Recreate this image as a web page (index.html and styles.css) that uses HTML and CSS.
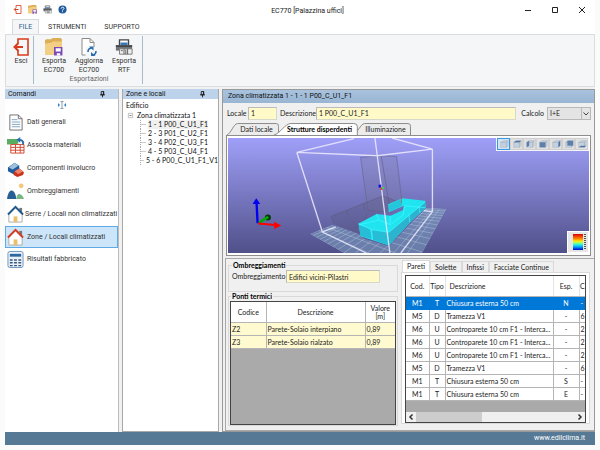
FILE: index.html
```html
<!DOCTYPE html>
<html lang="it">
<head>
<meta charset="utf-8">
<title>EC770 [Palazzina uffici]</title>
<link rel="stylesheet" href="styles.css">
</head>
<body>
<svg class="defs" aria-hidden="true">
  <defs>
    <symbol id="exit" viewBox="0 0 16 18"><path d="M5 5V1h10v16H5v-4" fill="none" stroke="#d83b1b" stroke-width="1.6"/><path d="M10 9H2M5.500 5L1.500 9l4 4" fill="none" stroke="#d83b1b" stroke-width="2"/></symbol>
    <symbol id="folder" viewBox="0 0 16 16"><path d="M0 14V2l1-1h4l2-1h7l1 1v13z" fill="#dcae55"/><path d="M0 15V5l6-1 1-1h8v12z" fill="#f2cf85"/><path d="M8 8h7.500v7.500H8z" fill="#7a4bb5"/><path d="M9.500 9h4.500v3H9.500zM10.500 13.500h3v2h-3z" fill="#fff"/></symbol>
    <symbol id="printer" viewBox="0 0 20 18"><path d="M5 7V1h10v6" fill="#fff" stroke="#444" stroke-width="1.500"/><path d="M6 4h8v3H6z" fill="#3a78b5"/><path d="M1 7h18v6H1z" fill="#6f7478"/><path d="M1 7h18v2H1z" fill="#43474a"/><path d="M5 11h14v6H5z" fill="#eee" stroke="#777"/><path d="M10 11v6M14 11v6M12 12v5M6.500 13h2" stroke="#555"/></symbol>
    <symbol id="pin" viewBox="0 0 6 8"><path d="M1.500 1h3v4h-3zM0 5h6M3 5v3" fill="none" stroke="#111"/><path d="M3.500 1h1v4h-1z" fill="#111"/></symbol>
    <symbol id="tab" viewBox="0 0 60 11" preserveAspectRatio="none"><path d="M0 11C4 10 8 0.500 12 0.500H57Q59.500 0.500 59.500 3V11" stroke="#8b8b8b" vector-effect="non-scaling-stroke"/></symbol>
    <symbol id="cube" viewBox="0 0 12 12"><path d="M2 4l3-2h6L9 4zM2 4h7v6H2zM9 4l2-2v6l-2 2z" fill="#c5d0dc" stroke="#a5b4c4" stroke-width=".6"/></symbol>
    <linearGradient id="sky" x1="0" y1="0" x2="0" y2="1"><stop offset="0" stop-color="#9f9ff8"/><stop offset="1" stop-color="#50508a"/></linearGradient>
    <linearGradient id="heat" x1="0" y1="0" x2="0" y2="1"><stop offset="0" stop-color="#d00"/><stop offset=".3" stop-color="#f80"/><stop offset=".45" stop-color="#fe0"/><stop offset=".6" stop-color="#6fa"/><stop offset=".75" stop-color="#0cf"/><stop offset="1" stop-color="#00c"/></linearGradient>
    <clipPath id="floor"><path d="M268 298L335 270 415 298 430 312 505 335 618 218 678 222 549 458z"/></clipPath>
  </defs>
</svg>
<div class="window">
  <header class="titlebar">
    <nav class="quick" aria-label="Accesso rapido">
      <button aria-label="Esci"><svg><use href="#exit"/></svg></button>
      <button aria-label="Esporta"><svg><use href="#folder"/></svg></button>
      <button aria-label="Stampa"><svg><use href="#printer"/></svg></button>
      <button aria-label="Aiuto"><svg viewBox="0 0 10 10"><circle cx="5" cy="5" r="4.500" fill="#205a9c"/><path d="M3.500 4C3.500 2 6.700 2 6.600 3.900 6.500 4.900 5 4.900 5 6.200M5 7v1" fill="none" stroke="#fff" stroke-width="1.100"/></svg></button>
    </nav>
    <h1>EC770 [Palazzina uffici]</h1>
    <div class="winbtns">
      <button aria-label="Riduci"><svg viewBox="0 0 8 8"><path d="M1 4.500h6" stroke="#222"/></svg></button>
      <button aria-label="Ingrandisci"><svg viewBox="0 0 8 8"><path d="M1.500 1.500h5v5h-5z" fill="none" stroke="#222"/></svg></button>
      <button aria-label="Chiudi"><svg viewBox="0 0 8 8"><path d="M1 1l6 6M7 1L1 7" stroke="#222"/></svg></button>
    </div>
  </header>
  <nav class="menu">
    <button class="on">FILE</button><button>STRUMENTI</button><button>SUPPORTO</button>
  </nav>
  <section class="ribbon">
    <div class="group"><div class="tools"><button class="slim"><svg><use href="#exit"/></svg>Esci</button></div></div>
    <div class="group wide">
      <div class="tools">
        <button><svg><use href="#folder"/></svg>Esporta<br>EC700</button>
        <button><svg viewBox="0 0 18 18"><path d="M2 .5h8l4 4V17H2z" fill="#fff" stroke="#8a8a8a"/><path d="M10 .5v4h4" fill="none" stroke="#8a8a8a"/><path d="M5.500 9h12v9h-12z" fill="#f5f6f7"/><path d="M8 14c0-3 2-4 4-4M12 17c3 0 4-2 4-4" fill="none" stroke="#2b6cae" stroke-width="1.600"/><path d="M9 8.500h4.500v4zM15.500 18H11v-4z" fill="#2b6cae"/></svg>Aggiorna<br>EC700</button>
        <button><svg><use href="#printer"/></svg>Esporta<br>RTF</button>
      </div>
      <span class="caption">Esportazioni</span>
    </div>
  </section>
  <main class="work">
    <aside class="commands">
      <h2>Comandi<svg><use href="#pin"/></svg></h2>
      <svg class="resize" viewBox="0 0 10 8"><path d="M5 1v6M3.500 .5h3M3.500 7.500h3" stroke="#8a9bb0"/><path d="M1 2l2 2-2 2zM9 2L7 4l2 2z" fill="#2f7fd0"/></svg>
      <nav>
        <button><svg viewBox="0 0 18 18"><path d="M3 1h9l4 4v12H3z" fill="#fff" stroke="#6c6f73"/><path d="M12 1v4h4" fill="none" stroke="#6c6f73"/><path d="M5 6h6M5 8.500h9M5 11h9M5 13.500h9" stroke="#7fa0bd"/></svg>Dati generali</button>
        <button><svg viewBox="0 0 18 18"><path d="M0 2h12v5l-4 1H0z" fill="#58ad62"/><path d="M4 8h14v9H4z" fill="#fff" stroke="#d4442a"/><path d="M4 11h14M4 14h14M9 8v9M14 8v9" stroke="#d4442a"/><path d="M17 8c1-4-2-5-4-5" fill="none" stroke="#2b6cae" stroke-width="2"/><path d="M10 3l4-3v6z" fill="#2b6cae"/></svg>Associa materiali</button>
        <button><svg viewBox="0 0 18 18"><path d="M1 8l7-5 5 3v5l-6 4-6-3z" fill="#1d5b9c"/><path d="M2 8l6-5 4 3-6 4z" fill="#9fc0de"/><path d="M7 13l6-4 5 4-1 3-6 2-4-2z" fill="#c8341b"/><path d="M8 12l5-3 4 3-5 3z" fill="#ef8068"/></svg>Componenti involucro</button>
        <button><svg viewBox="0 0 18 18"><circle cx="15" cy="3" r="2.500" fill="#f3c77c"/><path d="M0 17c1-7 3-9 5-9s4 3 5 9z" fill="#285f94"/><path d="M10 17c0-4 2-6 4-5s3 2 4 5z" fill="#76b783"/></svg>Ombreggiamenti</button>
        <button><svg viewBox="0 0 18 18"><path d="M13 2h3v6h-3z" fill="#777"/><path d="M2 9l7-7 7 7v8H2z" fill="#fff" stroke="#aaa"/><path d="M1 9l8-8 8 8" fill="none" stroke="#20598f" stroke-width="2"/><path d="M7 11h4v6H7z" fill="#edbd69"/></svg>Serre / Locali non climatizzati</button>
        <button class="on"><svg viewBox="0 0 18 18"><path d="M13 2h3v6h-3z" fill="#777"/><path d="M2 9l7-7 7 7v8H2z" fill="#fff" stroke="#aaa"/><path d="M1 9l8-8 8 8" fill="none" stroke="#d63a20" stroke-width="2"/><path d="M7 11h4v6H7z" fill="#edbd69"/></svg>Zone / Locali climatizzati</button>
        <button><svg viewBox="0 0 18 18"><rect x="1" y=".5" width="16" height="17" rx="2" fill="#e9f0f7" stroke="#6b93bc"/><path d="M3 3h12v3H3z" fill="#2d67a3"/><path d="M3 9.500h12M3 12.500h12M3 15.500h12" stroke="#37587c" stroke-width="1.500" stroke-dasharray="3 1.500"/></svg>Risultati fabbricato</button>
      </nav>
    </aside>
    <section class="zones">
      <h2>Zone e locali<svg><use href="#pin"/></svg></h2>
      <div class="tree">
        <p>Edificio</p>
        <p class="branch"><svg viewBox="0 0 7 7"><path d="M.5 .5h6v6h-6z" fill="#fff" stroke="#aaa"/><path d="M2 3.500h3" stroke="#555"/></svg>Zona climatizzata 1</p>
        <ul>
          <li class="on"><span>1 - 1 P00_C_U1_F1</span></li>
          <li>2 - 3 P01_C_U2_F1</li>
          <li>3 - 4 P02_C_U3_F1</li>
          <li>4 - 5 P03_C_U4_F1</li>
          <li>5 - 6 P00_C_U1_F1_V1</li>
        </ul>
      </div>
    </section>
    <section class="detail">
      <h2>Zona climatizzata 1 - 1 - 1 P00_C_U1_F1</h2>
      <form class="fields">
        <label for="loc">Locale</label><input id="loc" class="short" value="1">
        <label for="desc">Descrizione</label><input id="desc" class="long" value="1 P00_C_U1_F1">
        <label for="calc">Calcolo</label>
        <span class="combo"><select id="calc"><option>I+E</option></select><svg viewBox="0 0 9 11"><path d="M.5 0v11" stroke="#bbb"/><path d="M2.500 4.500l2.500 2.500 2.500-2.500" fill="none" stroke="#444"/></svg></span>
      </form>
      <div class="tabs">
        <button><svg fill="#ececec"><use href="#tab"/></svg><span>Dati locale</span></button>
        <button class="on"><svg fill="#fff"><use href="#tab"/></svg><span>Strutture disperdenti</span></button>
        <button><svg fill="#ececec"><use href="#tab"/></svg><span>Illuminazione</span></button>
      </div>
      <div class="view">
        <svg class="scene" viewBox="21 6 1086 350" preserveAspectRatio="none">
          <path d="M21 6h1086v350H21z" fill="url(#sky)"/>
          <g clip-path="url(#floor)"><path d="M268 298L481 209 678 222 549 458z" fill="#7894b8" opacity=".65"/><path id="grid" fill="none" stroke="#a9c3d6" stroke-width="2" opacity=".75"/></g>
          <path d="M420 65L482 60 528 62 545 205 510 232 442 226z" fill="#77779c" fill-opacity=".3" stroke="#666690" stroke-width="2"/>
          <path d="M482 60L510 232M487 182L545 205M330 245L487 182M330 245L338 265 413 295 440 235M378 226L384 247M428 206L434 228M400 260L410 292" fill="none" stroke="#626085" stroke-width="2"/>
          <path d="M330 245L487 182 545 205 413 270 413 295 338 265z" fill="#57557c" opacity=".3"/>
          <path d="M414 266L468 237 510 243 548 225 550 212 505 232 503 208 545 189 614 197 616 218 570 262 505 333 420 305z" fill="#20e4f0"/>
          <path d="M505 293L570 238 614 202 616 218 570 262 505 333z" fill="#2cb4cf"/>
          <path d="M455 285L505 293 505 333 457 316zM414 270L450 284 453 313 420 304z" fill="#28bdd6"/>
          <path d="M505 210L542 192 545 212 507 230z" fill="#24c6dc"/>
          <path d="M414 266L455 285 505 293 570 238 614 200M468 237L475 256 414 270M475 256L510 270 548 240 552 212 614 218M450 282L456 316M565 238L568 262M596 214L598 234M510 243L508 270" fill="none" stroke="#3ffaff" stroke-width="2"/>
          <path d="M400 8L228 50 470 60 636 40 515 6M228 50L305 292 437 356M463 6L470 60 508 356M636 40V230L541 356M305 292L345 277M636 230L610 227" fill="none" stroke="#eeecff" stroke-width="4" opacity=".85"/>
          <path d="M474 148h8v9h-8z" fill="#11d"/><path d="M480 156h6v8h-6z" fill="#e33"/><path d="M484 155h6v6h-6z" fill="#3d4"/><path d="M538 188l5 3v14" fill="none" stroke="#b45a4e" stroke-width="2"/>
          <path d="M110 265L107 205" stroke="#0000f0" stroke-width="7"/><path d="M95 207L106 189 118 207z" fill="#0000f0"/>
          <circle cx="141" cy="248" r="9" fill="#0a350a"/><path d="M114 264L142 246" stroke="#0a0" stroke-width="8"/>
          <path d="M112 266L163 271" stroke="#f00" stroke-width="6"/><path d="M160 261L181 272 160 283z" fill="#f00"/>
        </svg>
        <div class="viewbar">
          <button class="on" aria-label="Assonometria"><svg><use href="#cube"/></svg></button>
          <button aria-label="Alto"><svg viewBox="0 0 12 12"><use href="#cube"/><path d="M2 4l3-2h6L9 4z" fill="#4d75a3"/></svg></button>
          <button aria-label="Sinistra"><svg viewBox="0 0 12 12"><use href="#cube"/><path d="M2 4l3-2v6l-3 2z" fill="#5c80aa"/></svg></button>
          <button aria-label="Fronte"><svg viewBox="0 0 12 12"><use href="#cube"/><path d="M2 4h7v6H2z" fill="#5c80aa"/></svg></button>
          <button aria-label="Destra"><svg viewBox="0 0 12 12"><use href="#cube"/><path d="M9 4l2-2v6l-2 2z" fill="#4d75a3"/></svg></button>
          <button aria-label="Retro"><svg viewBox="0 0 12 12"><use href="#cube"/><path d="M4 2h7v6H4z" fill="#5c80aa"/></svg></button>
          <button aria-label="Basso"><svg viewBox="0 0 12 12"><use href="#cube"/><path d="M2 10l3-2h6l-2 2z" fill="#4d75a3"/></svg></button>
        </div>
        <button class="legend" aria-label="Scala colori"><svg viewBox="0 0 18 18"><path d="M4 1h10v16H4z" fill="url(#heat)"/><path d="M16 1v15" stroke="#555" stroke-width="2" stroke-dasharray="1 1"/></svg></button>
      </div>
      <div class="lower">
        <div class="left">
          <fieldset class="shade"><legend>Ombreggiamenti</legend><label for="omb">Ombreggiamento</label><input id="omb" value="Edifici vicini-Pilastri"></fieldset>
          <fieldset class="bridges"><legend>Ponti termici</legend>
            <div class="sheet">
              <table class="grid">
                <colgroup><col class="c35"><col><col class="c30"></colgroup>
                <thead><tr><th>Codice</th><th>Descrizione</th><th>Valore<br>[m]</th></tr></thead>
                <tbody><tr><td>Z2</td><td>Parete-Solaio interpiano</td><td>0,89</td></tr><tr><td>Z3</td><td>Parete-Solaio rialzato</td><td>0,89</td></tr></tbody>
              </table>
            </div>
          </fieldset>
        </div>
        <div class="right">
          <div class="subtabs"><button class="on">Pareti</button><button>Solette</button><button>Infissi</button><button>Facciate Continue</button></div>
          <div class="page">
            <div class="sheet">
              <table class="walls">
                <colgroup><col class="c23"><col class="c16"><col><col class="c26"><col class="c6"></colgroup>
                <thead><tr><th>Cod.</th><th>Tipo</th><th>Descrizione</th><th>Esp.</th><th>C</th></tr></thead>
                <tbody>
                  <tr class="on"><td>M1</td><td>T</td><td>Chiusura esterna 50 cm</td><td>N</td><td>-</td></tr>
                  <tr><td>M5</td><td>D</td><td>Tramezza V1</td><td>-</td><td>6</td></tr>
                  <tr><td>M6</td><td>U</td><td>Controparete 10 cm F1 - Interca...</td><td>-</td><td>2</td></tr>
                  <tr><td>M6</td><td>U</td><td>Controparete 10 cm F1 - Interca...</td><td>-</td><td>2</td></tr>
                  <tr><td>M6</td><td>U</td><td>Controparete 10 cm F1 - Interca...</td><td>-</td><td>2</td></tr>
                  <tr><td>M5</td><td>D</td><td>Tramezza V1</td><td>-</td><td>6</td></tr>
                  <tr><td>M1</td><td>T</td><td>Chiusura esterna 50 cm</td><td>S</td><td>-</td></tr>
                  <tr><td>M1</td><td>T</td><td>Chiusura esterna 50 cm</td><td>E</td><td>-</td></tr>
                </tbody>
              </table>
              <div class="scroll"><svg viewBox="0 0 10 10"><path d="M6.500 2.500L4 5l2.500 2.500" fill="none" stroke="#333" stroke-width="1.500"/></svg><i></i><svg viewBox="0 0 10 10"><path d="M3.500 2.500L6 5 3.500 7.500" fill="none" stroke="#333" stroke-width="1.500"/></svg></div>
            </div>
          </div>
        </div>
      </div>
    </section>
  </main>
  <footer><a href="#">www.edilclima.it</a></footer>
</div>
<script src="grid.js"></script>
</body>
</html>
```
FILE: styles.css
```css
* { box-sizing: border-box; }
html, body { height: 100%; }
body { margin: 0; background: #fbfbfb; color: #333; font: 7px/9px Roboto, "Open Sans", sans-serif; }
button, input, select { font: inherit; color: inherit; margin: 0; padding: 0; border: 0; background: none; border-radius: 0; }
h1, h2, p, ul { margin: 0; padding: 0; font: inherit; list-style: none; }
svg { display: block; flex: none; overflow: visible; }
.defs { position: absolute; width: 0; height: 0; }
.window { display: flex; flex-direction: column; height: 100%; padding: 0 5px 5px; }

.titlebar { display: grid; grid-template-columns: 1fr auto 1fr; height: 19px; align-items: center; background: #fff; }
.titlebar h1 { padding: 3px 0 0 15px; color: #222; }
.quick { display: flex; gap: 6px; padding-left: 8px; }
.quick svg { width: 9px; height: 9px; }
.winbtns { display: flex; justify-content: flex-end; gap: 19px; padding-right: 9px; }
.winbtns svg { width: 8px; height: 8px; }

.menu { display: flex; height: 15px; padding-left: 7px; background: #fff; }
.menu button { padding: 1px 9px 0; height: 15px; }
.menu .on { width: 27px; margin-bottom: -1px; padding: 0; height: 16px; border: 1px solid #d5dadd; border-bottom: 0; background: #f5f6f7; color: #2c5f8d; }

.ribbon { display: flex; flex: none; height: 53px; border: 1px solid #dadddf; background: #f5f6f7; }
.group { display: flex; flex-direction: column; align-items: center; margin: 1px 0 2px; padding: 2px 0 0 3px; border-right: 1px solid #a9bac9; }
.wide { width: 109px; padding: 2px 0 0 2px; }
.tools { display: flex; gap: 1px; }
.tools button { display: flex; flex-direction: column; align-items: center; width: 34px; line-height: 9px; white-space: nowrap; }
.tools .slim { width: 24px; }
.tools svg { width: 18px; height: 18px; margin-bottom: 1px; }
.caption { line-height: 9px; color: #666; }

.work { display: flex; flex: 1; gap: 3px; min-height: 0; padding-top: 2px; background: #f1f1f1; }
.work h2 { display: flex; flex: none; align-items: center; justify-content: space-between; height: 10px; padding: 0 13px 0 3px; background: #bdd3ec; color: #111; }
.work h2 svg { width: 5px; height: 8px; }
.commands { flex: none; width: 114px; background: #fff; border-right: 1px solid #bbb; }
.resize { width: 10px; height: 8px; margin: 2px auto; }
.commands nav { display: flex; flex-direction: column; }
.commands button { display: flex; align-items: center; gap: 3px; height: 23px; padding: 0 1px; border: 1px solid transparent; white-space: nowrap; text-align: left; }
.commands button svg { width: 17px; height: 17px; }
.commands button:nth-child(5) { gap: 1px; }
.commands .on { height: 22px; border-color: #5fa9e6; background: #cce5f8; }
.zones { flex: none; width: 97px; background: #fff; border: 1px solid #a8a8a8; border-top: 0; }
.tree { padding: 1px 0 0 3px; color: #111; font-family: Lato, sans-serif; white-space: nowrap; }
.tree p { line-height: 10px; }
.branch { display: flex; align-items: center; gap: 4px; padding-left: 2px; }
.branch svg { width: 5px; height: 5px; }
.tree ul { margin-left: 14px; }
.tree li { display: flex; align-items: center; gap: 2px; }
.tree .on span { background: #f0f0f0; }
.tree li::before { content: ""; width: 5px; height: 9px; border-left: 1px dotted #aaa; background: linear-gradient(#ccc, #ccc) center / 100% 1px no-repeat; }

.detail { display: flex; flex: 1; flex-direction: column; min-width: 0; border: 1px solid #999; background: #f0f0f0; color: #222; font-family: Lato, sans-serif; }
.work .detail h2 { height: 13px; padding-left: 5px; background: linear-gradient(#a9c3de, #98b5d2); font-family: Roboto, sans-serif; }
.fields { display: flex; flex: none; align-items: center; height: 20px; padding: 0 3px 0 4px; }
.fields input, .shade input { height: 13px; min-width: 0; padding: 0 2px; border: 1px solid #d8d8c8; border-top-color: #bbb; border-left-color: #bbb; background: #fffac8; }
.fields label { flex: none; }
.fields label:first-child { width: 21px; }
.fields label:nth-of-type(2) { width: 36px; }
.fields .short { width: 29px; margin-right: 3px; }
.fields .long { flex: 1; margin-right: 5px; }
.combo { display: flex; position: relative; margin-left: 3px; }
.combo select { width: 44px; height: 13px; padding-left: 2px; appearance: none; border: 1px solid #b8b8b8; background: #e4e4e4; }
.combo svg { position: absolute; right: 1px; top: 1px; width: 9px; height: 11px; pointer-events: none; }

.tabs { display: flex; flex: none; height: 12px; padding-left: 4px; }
.tabs button { position: relative; width: 52px; height: 12px; margin-right: -5px; padding-left: 7px; white-space: nowrap; }
.tabs svg { position: absolute; inset: 0; width: 100%; height: 12px; }
.tabs span { position: relative; }
.tabs .on { z-index: 1; width: 84px; font-weight: bold; color: #000; }
.tabs button:last-child { width: 58px; }
.view { position: relative; flex: none; height: 121px; margin: 0 3px; padding: 2px 1px; border: 1px solid #8d8d8d; background: #fff; }
.scene { width: 100%; height: 100%; overflow: hidden; }
.viewbar { display: flex; position: absolute; top: 1px; right: 1px; padding: 1px; background: #f5f5f5; }
.viewbar button { width: 13px; height: 12px; padding: 0 1px; border: 1px solid #d0d0d0; background: #e1e1e1; }
.viewbar svg { width: 10px; height: 10px; }
.viewbar .on { border-color: #3f96dc; background: #cfe5f7; }
.legend { position: absolute; right: 1px; bottom: 2px; width: 22px; height: 22px; padding: 1px; border: 1px solid #fff; background: #e6e6e6; }
.legend svg { width: 18px; height: 18px; }

.lower { display: flex; flex: 1; min-height: 0; gap: 1px; margin: 2px 0 0 2px; border: 1px solid #a8a8a8; border-right: 0; }
.left { display: flex; flex: 1; flex-direction: column; min-width: 0; padding: 2px 2px 4px; }
fieldset { position: relative; min-width: 0; margin: 0; padding: 0 2px; border: 1px solid #d9d9d9; }
legend { padding: 0 1px; margin-left: 1px; color: #000; font-weight: bold; }
.shade { display: flex; align-items: center; height: 31px; }
.shade label { flex: none; width: 54px; margin-left: 1px; }
.shade input { width: 94px; }
.bridges { flex: 1; min-height: 0; padding: 0 1px; }
.sheet { height: 100%; overflow: hidden; border: 1px solid #444; background: #aaa; }
table { width: 100%; border-collapse: collapse; table-layout: fixed; background: #fff; }
th, td { height: 13px; padding: 0 1px; overflow: hidden; border: 1px solid #b5b5b5; font-weight: normal; line-height: 8px; text-align: left; white-space: nowrap; }
th { height: 20px; text-align: center; }
tr > :first-child { border-left: 0; }
tr > :last-child { border-right: 0; }
thead th { border-top: 0; }
.grid td { background: #fffad0; }
.c35 { width: 35px; } .c30 { width: 30px; } .c26 { width: 26px; } .c23 { width: 23px; } .c16 { width: 16px; } .c6 { width: 6px; }
.right { display: flex; flex: 0 0 193px; flex-direction: column; padding: 1px 4px 6px 0; }
.subtabs { display: flex; flex: none; align-items: flex-end; height: 12px; padding-left: 1px; }
.subtabs button { height: 11px; padding: 0 4px; border: 1px solid #d9d9d9; border-bottom: 0; white-space: nowrap; }
.subtabs .on { height: 12px; background: #fff; }
.page { flex: 1; min-height: 0; padding: 2px 3px 0; border: 1px solid #d9d9d9; background: #fff; }
.right .sheet { display: flex; flex-direction: column; justify-content: space-between; }
.walls td:nth-child(-n+2), .walls td:nth-child(4) { text-align: center; }
.walls th:nth-child(3) { text-align: left; padding-left: 4px; }
.walls th { border-left-color: #e4e4e4; border-right-color: #e4e4e4; padding: 0; }
.walls .on td { background: #0078d7; color: #fff; border-color: #0078d7; }
.scroll { display: flex; justify-content: space-between; height: 10px; background: #f0f0f0; }
.scroll svg { width: 10px; height: 10px; }
.scroll i { width: 66px; margin-right: auto; background: #cdcdcd; }

footer { display: flex; flex: none; align-items: center; justify-content: flex-end; height: 13px; padding-right: 10px; background: #567a96; }
footer a { color: #fff; text-decoration: none; }
```
FILE: grid.js
```js
// Perspective floor grid: maps the unit square onto the four floor corners.
const corners = [[268, 298], [549, 458], [678, 222], [481, 209]];
const [[x0, y0], [x1, y1], [x2, y2], [x3, y3]] = corners;
const sx = x0 - x1 + x2 - x3, sy = y0 - y1 + y2 - y3;
const dx1 = x1 - x2, dx2 = x3 - x2, dy1 = y1 - y2, dy2 = y3 - y2;
const det = dx1 * dy2 - dx2 * dy1;
const g = (sx * dy2 - dx2 * sy) / det, h = (dx1 * sy - sx * dy1) / det;
const at = (u, v) => {
  const w = g * u + h * v + 1;
  return [((x1 - x0 + g * x1) * u + (x3 - x0 + h * x3) * v + x0) / w,
          ((y1 - y0 + g * y1) * u + (y3 - y0 + h * y3) * v + y0) / w];
};
const steps = 14;
let d = "";
for (let i = 0; i <= steps; i++) {
  const t = i / steps;
  d += `M${at(t, 0)}L${at(t, 1)}M${at(0, t)}L${at(1, t)}`;
}
document.getElementById("grid").setAttribute("d", d);
```
